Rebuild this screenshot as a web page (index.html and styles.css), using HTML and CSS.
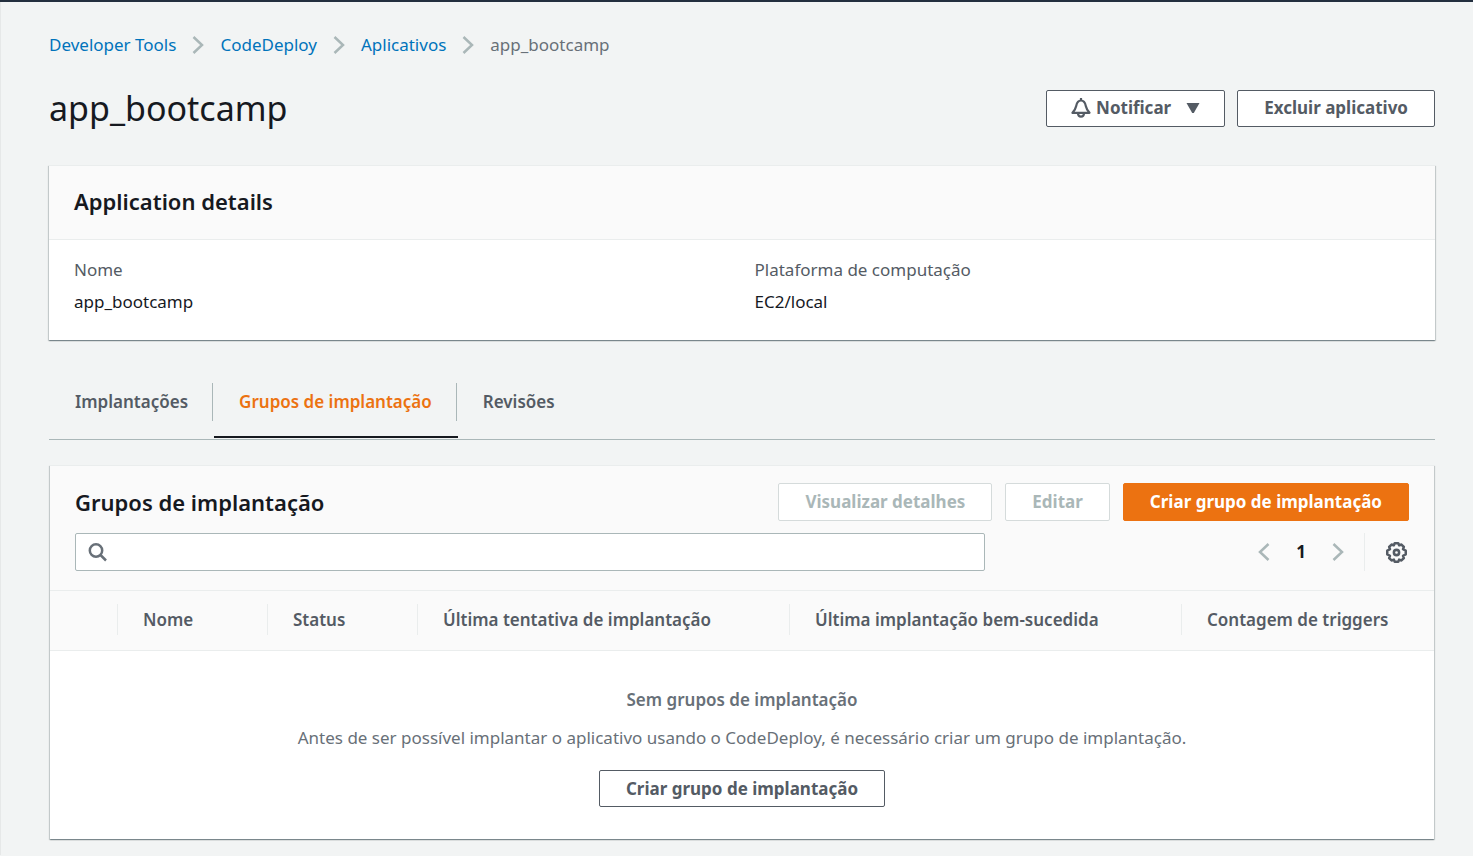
FILE: index.html
```html
<!DOCTYPE html>
<html lang="pt-BR">
<head>
<meta charset="utf-8">
<meta name="viewport" content="width=device-width, initial-scale=1">
<title>app_bootcamp - CodeDeploy</title>
<link rel="stylesheet" href="styles.css">
</head>
<body>
<main class="page">
  <nav class="breadcrumb" aria-label="Breadcrumb">
    <a href="#">Developer Tools</a>
    <svg class="chevron" viewBox="0 0 12 20" aria-hidden="true"><path d="M1.500 2l8.500 8-8.500 8"/></svg>
    <a href="#">CodeDeploy</a>
    <svg class="chevron" viewBox="0 0 12 20" aria-hidden="true"><path d="M1.500 2l8.500 8-8.500 8"/></svg>
    <a href="#">Aplicativos</a>
    <svg class="chevron" viewBox="0 0 12 20" aria-hidden="true"><path d="M1.500 2l8.500 8-8.500 8"/></svg>
    <span class="current">app_bootcamp</span>
  </nav>

  <header class="page-header">
    <h1>app_bootcamp</h1>
    <div class="actions">
      <button type="button" class="btn btn-notify">
        <svg class="bell" viewBox="0 0 20 20" aria-hidden="true"><path class="line" d="M10 2.500C7.200 2.500 5.800 5 5.200 8 4.600 11 3.500 12.500 1.500 14.800h17C16.500 12.500 15.400 11 14.800 8 14.200 5 12.800 2.500 10 2.500z"/><path class="line" d="M7 15c0 2.200 1.200 3.700 3 3.700s3-1.500 3-3.700"/><path class="line" d="M10 0v2"/></svg>
        <span>Notificar</span>
        <svg class="caret" viewBox="0 0 14 12" aria-hidden="true"><path d="M.5 1h13L7.800 11H6.200z"/></svg>
      </button>
      <button type="button" class="btn">Excluir aplicativo</button>
    </div>
  </header>

  <section class="card details">
    <div class="details-head"><h2>Application details</h2></div>
    <dl class="details-body">
      <div><dt>Nome</dt><dd>app_bootcamp</dd></div>
      <div><dt>Plataforma de computação</dt><dd>EC2/local</dd></div>
    </dl>
  </section>

  <div class="tabs" role="tablist">
    <button type="button" class="tab" role="tab" aria-selected="false"><span>Implantações</span></button>
    <button type="button" class="tab active" role="tab" aria-selected="true"><span>Grupos de implantação</span></button>
    <button type="button" class="tab" role="tab" aria-selected="false"><span>Revisões</span></button>
  </div>

  <section class="card groups">
    <div class="groups-head">
      <div class="title-row">
        <h2>Grupos de implantação</h2>
        <div class="actions">
          <button type="button" class="btn" disabled>Visualizar detalhes</button>
          <button type="button" class="btn" disabled>Editar</button>
          <button type="button" class="btn btn-primary">Criar grupo de implantação</button>
        </div>
      </div>
      <div class="filter-row">
        <div class="search">
          <svg viewBox="0 0 20 20" aria-hidden="true"><circle cx="8" cy="8.500" r="6.200"/><path d="M12.500 13l5.500 5.500"/></svg>
          <input type="search" aria-label="Pesquisar grupos de implantação">
        </div>
        <div class="pager">
          <button type="button" class="icon-btn" aria-label="Página anterior"><svg class="chevron" viewBox="0 0 12 20" aria-hidden="true"><path d="M10.500 2L2 10l8.500 8"/></svg></button>
          <span class="page-number">1</span>
          <button type="button" class="icon-btn" aria-label="Próxima página"><svg class="chevron" viewBox="0 0 12 20" aria-hidden="true"><path d="M1.500 2l8.500 8-8.500 8"/></svg></button>
          <button type="button" class="icon-btn settings" aria-label="Preferências"><svg class="gear" viewBox="0 0 20 20" aria-hidden="true"><path d="M8.300 1.200h3.400l.8 2 2.200-.8 2.300 2.300-.8 2.200 2.600 1.400v3.400l-2.600 1.400.8 2.200-2.300 2.300-2.200-.8-.8 2H8.300l-.8-2-2.200.8L3 15.300l.8-2.200-2.600-1.400V8.300l2.600-1.400L3 4.700l2.300-2.300 2.200.8z"/><circle cx="10" cy="10" r="2.500"/></svg></button>
        </div>
      </div>
    </div>
    <table class="groups-table">
      <colgroup><col class="col-select"><col class="col-small"><col class="col-small"><col class="col-attempt"><col class="col-success"><col></colgroup>
      <thead>
        <tr>
          <td></td>
          <th scope="col"><span>Nome</span></th>
          <th scope="col"><span>Status</span></th>
          <th scope="col"><span>Última tentativa de implantação</span></th>
          <th scope="col"><span>Última implantação bem-sucedida</span></th>
          <th scope="col"><span>Contagem de triggers</span></th>
        </tr>
      </thead>
      <tbody>
        <tr>
          <td colspan="6" class="empty">
            <strong>Sem grupos de implantação</strong>
            <p>Antes de ser possível implantar o aplicativo usando o CodeDeploy, é necessário criar um grupo de implantação.</p>
            <button type="button" class="btn">Criar grupo de implantação</button>
          </td>
        </tr>
      </tbody>
    </table>
  </section>
</main>
</body>
</html>
```

FILE: styles.css
```css
* { box-sizing: border-box; }

body {
  margin: 0;
  min-height: 100vh;
  background: #f2f4f4;
  border-top: 2px solid #232f3e;
  color: #16191f;
  font-family: "Noto Sans", "Open Sans", sans-serif;
  font-size: 17px;
  line-height: 24px;
}

h1, h2, p, dl, dd { margin: 0; }

.page {
  border-left: 1px solid #e6e8e8;
  padding: 31px 38px 16px 48px;
}

.breadcrumb { display: flex; align-items: center; gap: 16px; }
.breadcrumb a { color: #0073bb; text-decoration: none; }
.breadcrumb .current { color: #687078; }

.chevron {
  display: block;
  width: 12px;
  height: 20px;
  fill: none;
  stroke: #aab7b8;
  stroke-width: 2.500;
}

.page-header {
  display: flex;
  align-items: center;
  justify-content: space-between;
  margin-top: 26px;
}
.page-header h1 { font-size: 34px; font-weight: 400; line-height: 50px; }

.actions { display: flex; gap: 12px; }

.btn {
  display: inline-flex;
  align-items: center;
  justify-content: center;
  height: 37px;
  padding: 0 26px;
  border: 1px solid #545b64;
  border-radius: 2px;
  background: #fff;
  color: #545b64;
  font: 700 17px/24px "Noto Sans", "Open Sans", sans-serif;
  white-space: nowrap;
}
.btn:disabled { border-color: #d5dbdb; color: #aab7b8; }
.btn-primary { border-color: #ec7211; background: #ec7211; color: #fff; }

.btn-notify { gap: 5px; padding: 0 24px; }
.bell { width: 20px; height: 20px; }
.bell .line { fill: none; stroke: #545b64; stroke-width: 2.200; stroke-linejoin: round; }
.caret { width: 14px; height: 12px; margin-left: 10px; fill: #545b64; }

.card {
  background: #fff;
  border-top: 1px solid #eaeded;
  box-shadow: 0 1px 1px 0 rgba(0, 28, 36, 0.3), 1px 1px 1px 0 rgba(0, 28, 36, 0.15), -1px 1px 1px 0 rgba(0, 28, 36, 0.15);
}
.card h2 { font-size: 22px; font-weight: 600; line-height: 28px; }

.details { margin-top: 32px; }
.details-head { padding: 21px 25px 24px; background: #fafafa; border-bottom: 1px solid #eaeded; }
.details-body {
  display: grid;
  grid-template-columns: 1fr 1fr;
  gap: 25px;
  padding: 18px 25px 26px;
}
.details-body dt { margin-bottom: 8px; color: #545b64; }

.tabs {
  display: flex;
  margin-top: 43px;
  border-bottom: 1px solid #aab7b8;
}
.tab {
  padding: 0 1px 15px 0;
  border: 0;
  border-bottom: 2px solid transparent;
  margin-bottom: 1px;
  background: none;
  color: #545b64;
  font: 600 17px/38px "Noto Sans", "Open Sans", sans-serif;
}
.tab span { display: block; padding: 0 24px 0 25px; border-right: 1px solid #aab7b8; }
.tab:first-child span { padding-left: 26px; }
.tab:last-child span { border-right: 0; }
.tab.active { border-bottom-color: #16191f; color: #ec7211; }

.groups { margin: 25px 1px 0; }
.groups-head { padding: 17px 25px 19px; background: #fafafa; border-bottom: 1px solid #eaeded; }
.title-row { display: flex; align-items: center; justify-content: space-between; }
.title-row .actions { gap: 13px; }
.title-row .btn { height: 38px; }
.filter-row { display: flex; align-items: center; justify-content: space-between; margin-top: 12px; }

.search {
  display: flex;
  align-items: center;
  flex: 0 0 68.200%;
  height: 38px;
  padding: 0 12px;
  border: 1px solid #aab7b8;
  border-radius: 2px;
  background: #fff;
}
.search svg { width: 20px; height: 20px; fill: none; stroke: #687078; stroke-width: 2.500; }
.search input {
  flex: 1;
  min-width: 0;
  height: 34px;
  padding: 0 10px;
  border: 0;
  background: none;
  outline: 0;
  font: inherit;
}

.pager { display: flex; align-items: center; }
.icon-btn { display: flex; align-items: center; padding: 0; border: 0; background: none; }
.page-number { width: 62px; font-weight: 700; text-align: center; }
.settings { height: 38px; margin-left: 20px; padding: 0 2px 0 21px; border-left: 1px solid #eaeded; }
.gear { width: 21px; height: 21px; fill: none; stroke: #545b64; stroke-width: 2.400; stroke-linejoin: round; }

.groups-table { width: 100%; border-collapse: collapse; table-layout: fixed; }
.col-select { width: 67px; }
.col-small { width: 150px; }
.col-attempt { width: 372px; }
.col-success { width: 392px; }
.groups-table thead { background: #fafafa; border-bottom: 1px solid #eaeded; }
.groups-table th { padding: 13px 0 15px; color: #545b64; font-weight: 600; text-align: left; }
.groups-table th span { display: block; padding-left: 25px; border-left: 1px solid #eaeded; line-height: 31px; white-space: nowrap; }
.empty { padding: 37px 25px 32px; color: #687078; text-align: center; }
.empty strong { display: block; font-weight: 600; }
.empty p { margin: 14px 0 20px; }
```
